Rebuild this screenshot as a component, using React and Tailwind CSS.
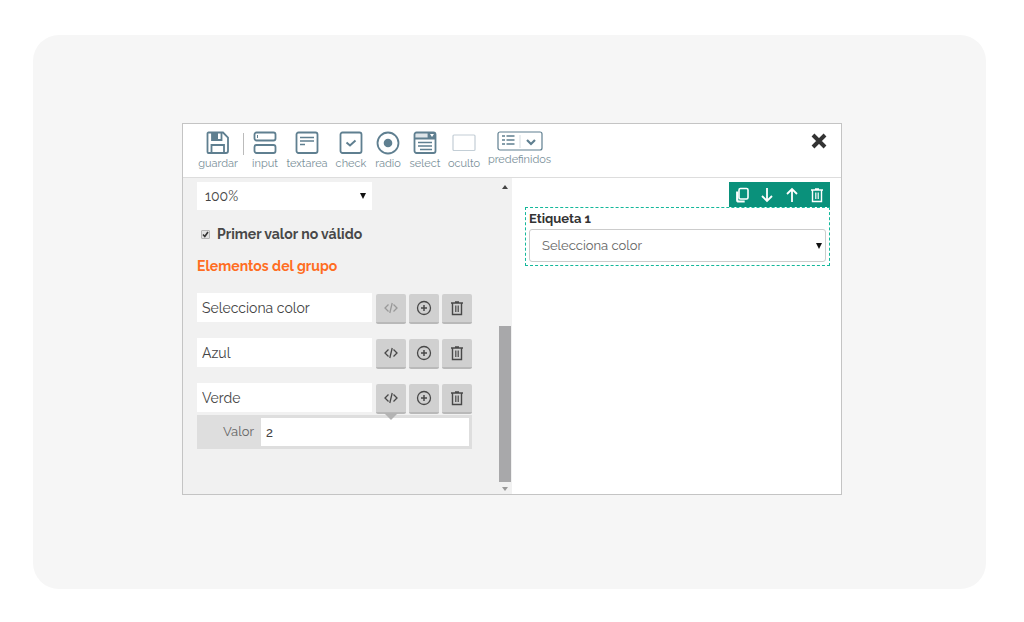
import { useState } from 'react';

const SaveIcon = () => (
  <svg width="24" height="24" viewBox="0 0 24 24" fill="none" stroke="currentColor" strokeWidth="1.800">
    <path d="M2.500 1.500h14.500l5 5v13.500a2 2 0 0 1-2 2h-17.500a1 1 0 0 1-1-1v-18.500a1 1 0 0 1 1-1z" />
    <path d="M6 1.500v7.500h9.500v-7.500M5.500 22v-8h12.500v8" />
    <path d="M6 2h6v7h-6z" fill="currentColor" stroke="none" />
  </svg>
);

const InputIcon = () => (
  <svg width="24" height="24" viewBox="0 0 24 24" fill="none" stroke="currentColor" strokeWidth="1.800">
    <rect x="1.500" y="1.500" width="21" height="8" rx="2" />
    <rect x="1.500" y="14" width="21" height="8" rx="2" />
    <path d="M4.500 4v3" strokeWidth="1" />
  </svg>
);

const TextareaIcon = () => (
  <svg width="24" height="24" viewBox="0 0 24 24" fill="none" stroke="currentColor" strokeWidth="1.800">
    <rect x="1.500" y="1.500" width="21" height="20.500" rx="2" />
    <path d="M5 6.500h14M5 10h14M5 13.500h5" strokeWidth="1.600" />
  </svg>
);

const CheckIcon = () => (
  <svg width="24" height="24" viewBox="0 0 24 24" fill="none" stroke="currentColor" strokeWidth="1.800">
    <rect x="1.500" y="1.500" width="21" height="20.500" rx="2" />
    <path d="M7.500 11.500l3.500 3 5.500-5" strokeWidth="2" />
  </svg>
);

const RadioIcon = () => (
  <svg width="24" height="24" viewBox="0 0 24 24" fill="none" stroke="currentColor" strokeWidth="1.800">
    <circle cx="12" cy="12" r="10.500" />
    <circle cx="12" cy="12" r="4.300" fill="currentColor" stroke="none" />
  </svg>
);

const SelectIcon = () => (
  <svg width="24" height="24" viewBox="0 0 24 24" fill="none" stroke="currentColor" strokeWidth="1.800">
    <rect x="1.500" y="1.500" width="21" height="20.500" rx="2" />
    <path d="M2 2h13v5h-13z" fill="currentColor" stroke="none" opacity="0.200" />
    <path d="M1.500 7.500h21M15.500 2v5" />
    <path d="M16 2h6v5h-6z" fill="currentColor" stroke="none" />
    <path d="M17 3h4l-2 3z" fill="#fff" stroke="none" />
    <path d="M5 11.500h14M5 15h14M7 18.500h12" strokeWidth="1.600" />
  </svg>
);

const HiddenIcon = () => (
  <svg width="24" height="24" viewBox="0 0 24 24" fill="none" stroke="#c3ced6" strokeWidth="1.200">
    <rect x="1" y="4" width="22" height="15.500" rx="1" />
  </svg>
);

const PresetsIcon = () => (
  <svg width="46" height="20" viewBox="0 0 46 20" fill="none" stroke="currentColor">
    <rect x="1" y="1" width="44" height="18" rx="2" strokeWidth="1.200" />
    <path d="M5 5h3M5 9h3M5 13h3M9.500 5h8M9.500 9h8M9.500 13h8" strokeWidth="1.600" />
    <path d="M23 4v13" stroke="#d5dde2" />
    <path d="M30 9l4 4 4-4" strokeWidth="2.200" />
  </svg>
);

const CodeIcon = () => (
  <svg width="14" height="12" viewBox="0 0 14 12" fill="none" stroke="currentColor" strokeWidth="1.300">
    <path d="M4.500 2.500l-3.500 3.500 3.500 3.500M9.500 2.500l3.500 3.500-3.500 3.500M8.200 1l-2.400 10" />
  </svg>
);

const PlusIcon = () => (
  <svg width="16" height="16" viewBox="0 0 16 16" fill="none" stroke="currentColor" strokeWidth="1.300">
    <circle cx="8" cy="8" r="6.500" />
    <path d="M8 5v6M5 8h6" strokeWidth="1.500" />
  </svg>
);

const TrashIcon = () => (
  <svg width="14" height="16" viewBox="0 0 14 16" fill="none" stroke="currentColor" strokeWidth="1.400">
    <path d="M1 3h12M5 2h4M2.500 3v11.500h9v-11.500" />
    <path d="M5.800 5.500v6.500M8.200 5.500v6.500" strokeWidth="1.200" />
  </svg>
);

const CopyIcon = () => (
  <svg width="14" height="16" viewBox="0 0 14 16" fill="none" stroke="currentColor" strokeWidth="1.600">
    <rect x="4" y="1.500" width="9" height="10.500" rx="1.500" />
    <path d="M2.200 4.500v8.500a1.500 1.500 0 0 0 1.500 1.500h6" strokeWidth="2.200" />
  </svg>
);

const ArrowIcon = ({ up }) => (
  <svg width="14" height="16" viewBox="0 0 14 16" fill="none" stroke="currentColor" strokeWidth="1.800">
    <path d={up ? 'M7 15v-13M2 7l5-5 5 5' : 'M7 1v13M2 9l5 5 5-5'} />
  </svg>
);

const CloseIcon = () => (
  <svg width="16" height="16" viewBox="0 0 16 16" fill="none" stroke="currentColor" strokeWidth="4">
    <path d="M2 2l12 12M14 2l-12 12" />
  </svg>
);

const Caret = ({ className }) => (
  <svg className={className} width="6" height="6" viewBox="0 0 6 6" fill="#111">
    <path d="M0 0h6l-3 6z" />
  </svg>
);

const tools = [
  { label: 'input', Icon: InputIcon, width: 'w-[28px]' },
  { label: 'textarea', Icon: TextareaIcon, width: 'w-[42px]' },
  { label: 'check', Icon: CheckIcon, width: 'w-[32px]' },
  { label: 'radio', Icon: RadioIcon, width: 'w-[28px]' },
  { label: 'select', Icon: SelectIcon, width: 'w-[32px]' },
  { label: 'oculto', Icon: HiddenIcon, width: 'w-[32px]' },
];

const ToolButton = ({ label, Icon, width }) => (
  <button type="button" className={`flex flex-col items-center ${width}`}>
    <Icon />
    <span className="text-[11px] leading-[18px] text-[#7a8f99]">{label}</span>
  </button>
);

const RowButton = ({ label, disabled, children }) => (
  <button
    type="button"
    aria-label={label}
    disabled={disabled}
    className="flex h-[30px] w-[30px] items-center justify-center rounded-xs border-b-2 border-[#b9b9b9] bg-[#d0d0d0] text-[#484848] disabled:text-[#999]"
  >
    {children}
  </button>
);

const GroupRow = ({ value, onChange, first }) => (
  <div className="flex items-start gap-1">
    <input
      aria-label="Elemento"
      value={value}
      onChange={(e) => onChange(e.target.value)}
      className="h-[29px] min-w-0 flex-1 bg-white px-[5px] text-sm text-[#444] outline-none"
    />
    <div className="flex gap-[3px] pt-px">
      <RowButton label="Editar valor" disabled={first}><CodeIcon /></RowButton>
      <RowButton label="Añadir"><PlusIcon /></RowButton>
      <RowButton label="Eliminar"><TrashIcon /></RowButton>
    </div>
  </div>
);

const App = () => {
  const [items, setItems] = useState(['Selecciona color', 'Azul', 'Verde']);
  const [invalidFirst, setInvalidFirst] = useState(true);
  const [itemValue, setItemValue] = useState('2');

  const updateItem = (index, value) => {
    setItems(items.map((item, i) => (i === index ? value : item)));
  };

  return (
    <div className="min-h-screen bg-white pt-[35px] pr-[38px] pb-[33px] pl-[33px] font-['Raleway','Lato',sans-serif]">
      <main className="w-full rounded-[26px] bg-[#f6f6f6] pt-[88px] pr-[15px] pb-[94px] pl-[20px]">
        <section className="mx-auto w-full max-w-[660px] border border-[#c4c4c4] bg-white">
          {/* Toolbar */}
          <header className="flex h-[54px] items-start border-b border-[#ddd] px-[14px] pt-[7px] text-[#5f7f90]">
            <ToolButton label="guardar" Icon={SaveIcon} width="w-[42px]" />
            <div className="mx-[4px] mt-[2px] h-[22px] w-px bg-[#bbb]" />
            <div className="flex items-start gap-[7px] pl-[3px]">
              {tools.map((tool) => (
                <ToolButton key={tool.label} {...tool} />
              ))}
              <button type="button" className="flex w-[65px] flex-col items-center">
                <PresetsIcon />
                <span className="text-[11px] leading-[18px] text-[#7a8f99]">predefinidos</span>
              </button>
            </div>
            <button type="button" aria-label="Cerrar" className="ml-auto pt-[2px] text-[#333]">
              <CloseIcon />
            </button>
          </header>

          <div className="grid grid-cols-2">
            {/* Settings */}
            <div className="flex bg-[#f1f1f1]">
              <div className="min-w-0 flex-1 pt-1 pr-[25px] pb-[45px] pl-[14px]">
                <div className="relative w-[175px]">
                  <select aria-label="Ancho" className="h-[28px] w-full appearance-none bg-white px-2 text-sm text-[#444]">
                    <option>100%</option>
                  </select>
                  <Caret className="pointer-events-none absolute top-[11px] right-[6px]" />
                </div>

                <label className="mt-[14px] flex h-5 items-center gap-[7px] pl-1 text-sm font-bold text-[#484848]">
                  <span className="relative flex">
                    <input
                      type="checkbox"
                      checked={invalidFirst}
                      onChange={(e) => setInvalidFirst(e.target.checked)}
                      className="peer h-[9px] w-[9px] appearance-none rounded-[1px] border border-[#b5b5b5] bg-[#e2e2e2]"
                    />
                    <svg
                      className="pointer-events-none absolute inset-0 hidden peer-checked:block"
                      width="9"
                      height="9"
                      viewBox="0 0 9 9"
                      fill="none"
                      stroke="#333"
                      strokeWidth="1.600"
                    >
                      <path d="M2 4.500l1.800 2 3.200-4.500" />
                    </svg>
                  </span>
                  Primer valor no válido
                </label>

                <h2 className="mt-[10px] text-sm leading-[24px] font-bold text-[#ff6d22]">Elementos del grupo</h2>

                <div className="mt-[15px] flex flex-col gap-[14px]">
                  {items.map((item, index) => (
                    <GroupRow
                      key={index}
                      value={item}
                      first={index === 0}
                      onChange={(value) => updateItem(index, value)}
                    />
                  ))}
                </div>

                <div className="relative mt-px flex h-[34px] items-center border-[3px] border-[#dedede] bg-[#dedede]">
                  <svg className="absolute -top-[5px] right-[71px]" width="14" height="7" viewBox="0 0 14 7" fill="#b3b3b3">
                    <path d="M0 0h14l-7 7z" />
                  </svg>
                  <label htmlFor="item-value" className="w-[61px] pr-[7px] text-right text-[13px] text-[#666]">Valor</label>
                  <input
                    id="item-value"
                    value={itemValue}
                    onChange={(e) => setItemValue(e.target.value)}
                    className="h-[28px] min-w-0 flex-1 bg-white px-[5px] text-[13px] font-medium text-[#444] outline-none"
                  />
                </div>
              </div>

              {/* Scrollbar */}
              <div className="flex w-[15px] shrink-0 flex-col items-center justify-between pt-[7px] pb-[3px]">
                <svg width="6" height="4" viewBox="0 0 6 4" fill="#444"><path d="M0 4h6l-3-4z" /></svg>
                <div className="flex flex-col items-center gap-[5px]">
                  <div className="h-[156px] w-[12px] bg-[#a8a8aa]" />
                  <svg width="6" height="4" viewBox="0 0 6 4" fill="#999"><path d="M0 0h6l-3 4z" /></svg>
                </div>
              </div>
            </div>

            {/* Preview */}
            <div className="flex flex-col pt-1 pr-[11px] pl-[13px]">
              <div className="flex h-[25px] w-[101px] items-center justify-around self-end bg-[#0a917b] text-white">
                <button type="button" aria-label="Duplicar"><CopyIcon /></button>
                <button type="button" aria-label="Bajar"><ArrowIcon /></button>
                <button type="button" aria-label="Subir"><ArrowIcon up /></button>
                <button type="button" aria-label="Eliminar campo"><TrashIcon /></button>
              </div>
              <div className="border border-dashed border-[#14b89a] px-[3px] pt-px pb-[3px]">
                <label htmlFor="preview" className="block text-[13px] leading-[20px] font-bold text-[#333]">Etiqueta 1</label>
                <div className="relative">
                  <select id="preview" className="block h-[33px] w-full appearance-none rounded-[3px] border border-[#ccc] bg-white px-3 text-[13px] text-[#666]">
                    <option>{items[0]}</option>
                  </select>
                  <Caret className="pointer-events-none absolute top-[14px] right-1" />
                </div>
              </div>
            </div>
          </div>
        </section>
      </main>
    </div>
  );
};

export default App;
